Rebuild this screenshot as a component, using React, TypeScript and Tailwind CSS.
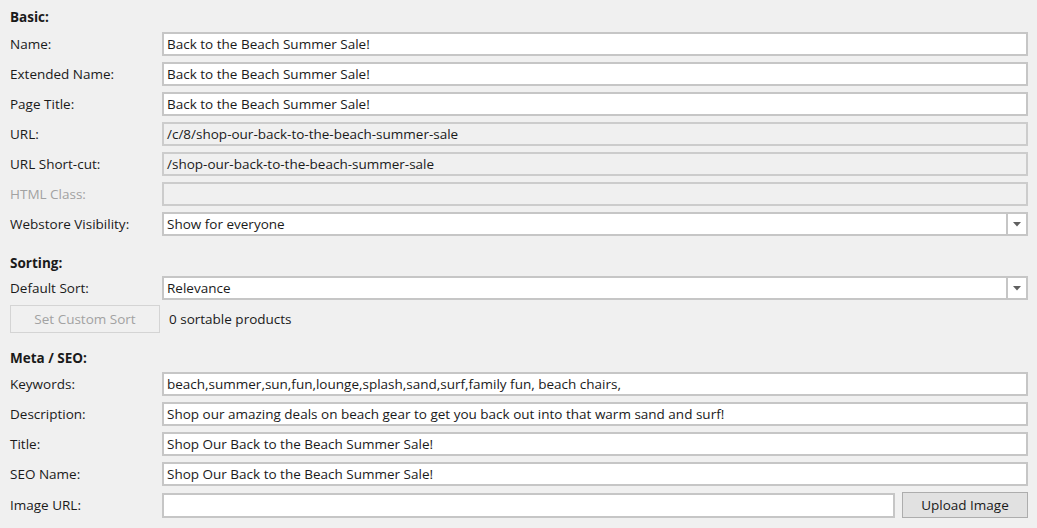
import React from 'react';

const font = { fontFamily: '"Segoe UI", "Open Sans", "Noto Sans", sans-serif' };

const SectionTitle: React.FC<{ title: string; className?: string }> = ({ title, className = '' }) => (
  <div className={`h-5 flex items-center text-[13.5px] font-bold text-[#1a1a1a] ${className}`}>{title}</div>
);

const Arrow = () => (
  <div className="w-[20px] h-full border-l-2 border-[#c6c6c6] flex items-center justify-center">
    <svg width="8" height="5" viewBox="0 0 8 5">
      <path d="M0 0 L8 0 L4 4.5 Z" fill="#606060" />
    </svg>
  </div>
);

const TextRow: React.FC<{ label: string; value?: string; readOnly?: boolean; disabled?: boolean }> = ({
  label,
  value = '',
  readOnly,
  disabled,
}) => {
  const boxStyle = readOnly || disabled ? 'bg-[#f0f0f0] border-[#cccccc]' : 'bg-white border-[#c6c6c6]';
  return (
    <div className="flex items-center h-6 mt-[6px]">
      <div className={`w-[152px] shrink-0 text-[13.5px] ${disabled ? 'text-[#a2a2a2]' : 'text-[#1a1a1a]'}`}>{label}</div>
      <div className={`flex-1 h-6 border-2 ${boxStyle} flex items-center px-[3px] text-[13.5px] text-[#1a1a1a] whitespace-nowrap overflow-hidden`}>
        {value}
      </div>
    </div>
  );
};

const SelectRow: React.FC<{ label: string; value: string; className?: string }> = ({ label, value, className = '' }) => (
  <div className={`flex items-center h-6 ${className}`}>
    <div className="w-[152px] shrink-0 text-[13.5px] text-[#1a1a1a]">{label}</div>
    <div className="flex-1 h-6 border-2 border-[#c6c6c6] bg-white flex items-center">
      <div className="flex-1 px-[3px] text-[13.5px] text-[#1a1a1a]">{value}</div>
      <Arrow />
    </div>
  </div>
);

export default function App() {
  return (
    <div className="w-[1037px] h-[528px] bg-[#f0f0f0] overflow-hidden" style={font}>
      <div className="pl-[10px] pr-[9px] pt-[7px]">
        <SectionTitle title="Basic:" />
        <div className="-mt-[1px]">
          <TextRow label="Name:" value="Back to the Beach Summer Sale!" />
          <TextRow label="Extended Name:" value="Back to the Beach Summer Sale!" />
          <TextRow label="Page Title:" value="Back to the Beach Summer Sale!" />
          <TextRow label="URL:" value="/c/8/shop-our-back-to-the-beach-summer-sale" readOnly />
          <TextRow label="URL Short-cut:" value="/shop-our-back-to-the-beach-summer-sale" readOnly />
          <TextRow label="HTML Class:" disabled />
          <SelectRow label="Webstore Visibility:" value="Show for everyone" className="mt-[6px]" />
        </div>

        <SectionTitle title="Sorting:" className="mt-[17px]" />
        <SelectRow label="Default Sort:" value="Relevance" className="mt-[3px]" />
        <div className="flex items-center mt-[5px] h-7">
          <button className="w-[150px] h-7 border border-[#d4d4d4] bg-[#f0f0f0] text-[13.5px] text-[#a2a2a2]">
            Set Custom Sort
          </button>
          <span className="ml-[9px] text-[13.5px] text-[#1a1a1a]">0 sortable products</span>
        </div>

        <SectionTitle title="Meta / SEO:" className="mt-[15px]" />
        <div className="-mt-[2px]">
          <TextRow label="Keywords:" value="beach,summer,sun,fun,lounge,splash,sand,surf,family fun, beach chairs," />
          <TextRow
            label="Description:"
            value="Shop our amazing deals on beach gear to get you back out into that warm sand and surf!"
          />
          <TextRow label="Title:" value="Shop Our Back to the Beach Summer Sale!" />
          <TextRow label="SEO Name:" value="Shop Our Back to the Beach Summer Sale!" />
          <div className="flex items-center h-[26px] mt-[6px]">
            <div className="w-[152px] shrink-0 text-[13.5px] text-[#1a1a1a]">Image URL:</div>
            <div className="flex-1 h-[25px] border-2 border-[#c6c6c6] bg-white" />
            <button className="ml-[7px] w-[126px] h-[26px] border border-[#adadad] bg-[#e1e1e1] text-[13.5px] text-[#1a1a1a]">
              Upload Image
            </button>
          </div>
        </div>
      </div>
    </div>
  );
}
